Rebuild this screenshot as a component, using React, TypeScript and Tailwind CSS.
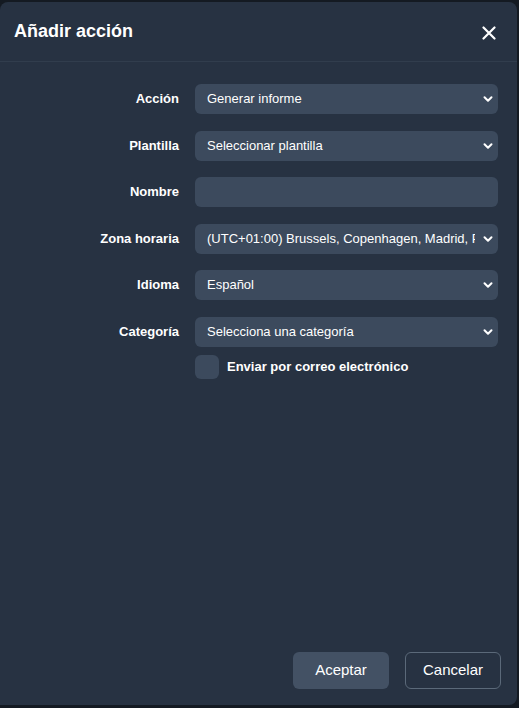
import React from "react";

function Chevron() {
    return (
        <svg width="10" height="10" viewBox="0 0 10 10" className="shrink-0">
            <path d="M1.5 3.2 L5 6.7 L8.5 3.2" fill="none" stroke="#ffffff" strokeWidth="2" strokeLinecap="round" strokeLinejoin="round" />
        </svg>
    );
}

function SelectBox({ value }: { value: string }) {
    return (
        <div className="flex h-[30px] min-w-0 items-center gap-2 rounded-md bg-[#3c4a5d] pl-3 pr-[5px]">
            <span className="min-w-0 flex-1 overflow-hidden whitespace-nowrap text-[13px] text-white">{value}</span>
            <Chevron />
        </div>
    );
}

const rows: { label: string; value?: string }[] = [
    { label: "Acción", value: "Generar informe" },
    { label: "Plantilla", value: "Seleccionar plantilla" },
    { label: "Nombre" },
    { label: "Zona horaria", value: "(UTC+01:00) Brussels, Copenhagen, Madrid, Paris" },
    { label: "Idioma", value: "Español" },
    { label: "Categoría", value: "Selecciona una categoría" },
];

export default function App() {
    return (
        <div className="h-[708px] w-[519px] bg-[#141a22] pt-[2px] font-['Liberation_Sans',Arial,sans-serif]">
            <div className="flex h-[703px] w-[517px] flex-col rounded-t-lg rounded-br-lg bg-[#273242]">
                <div className="flex h-[60px] shrink-0 items-center justify-between border-b border-[#313d4d] pl-[14px] pr-[21px]">
                    <h2 className="text-[18px] font-bold text-white">Añadir acción</h2>
                    <svg width="14" height="14" viewBox="0 0 14 14" className="mt-[3px]">
                        <path d="M1.5 1.5 L12.5 12.5 M12.5 1.5 L1.5 12.5" stroke="#ffffff" strokeWidth="2.2" strokeLinecap="round" />
                    </svg>
                </div>

                <div className="flex-1 pr-[19px] pt-[22px]">
                    <div className="grid grid-cols-[179px_minmax(0,1fr)] gap-x-4 gap-y-[16.5px]">
                        {rows.map((r) => (
                            <React.Fragment key={r.label}>
                                <label className="flex items-center justify-end text-[13px] font-bold text-white">{r.label}</label>
                                {r.value ? (
                                    <SelectBox value={r.value} />
                                ) : (
                                    <div className="h-[30px] rounded-md bg-[#3c4a5d]" />
                                )}
                            </React.Fragment>
                        ))}
                    </div>
                    <div className="ml-[195px] mt-2 flex items-center gap-2">
                        <div className="h-6 w-6 rounded-md bg-[#3c4a5d]" />
                        <span className="text-[13px] font-bold text-white">Enviar por correo electrónico</span>
                    </div>
                </div>

                <div className="flex justify-end gap-4 pb-4 pr-4">
                    <button className="h-[37px] w-[96px] rounded-md bg-[#435164] text-[15px] text-white">Aceptar</button>
                    <button className="h-[37px] w-[96px] rounded-md border border-[#5b6979] text-[15px] text-white">Cancelar</button>
                </div>
            </div>
        </div>
    );
}
